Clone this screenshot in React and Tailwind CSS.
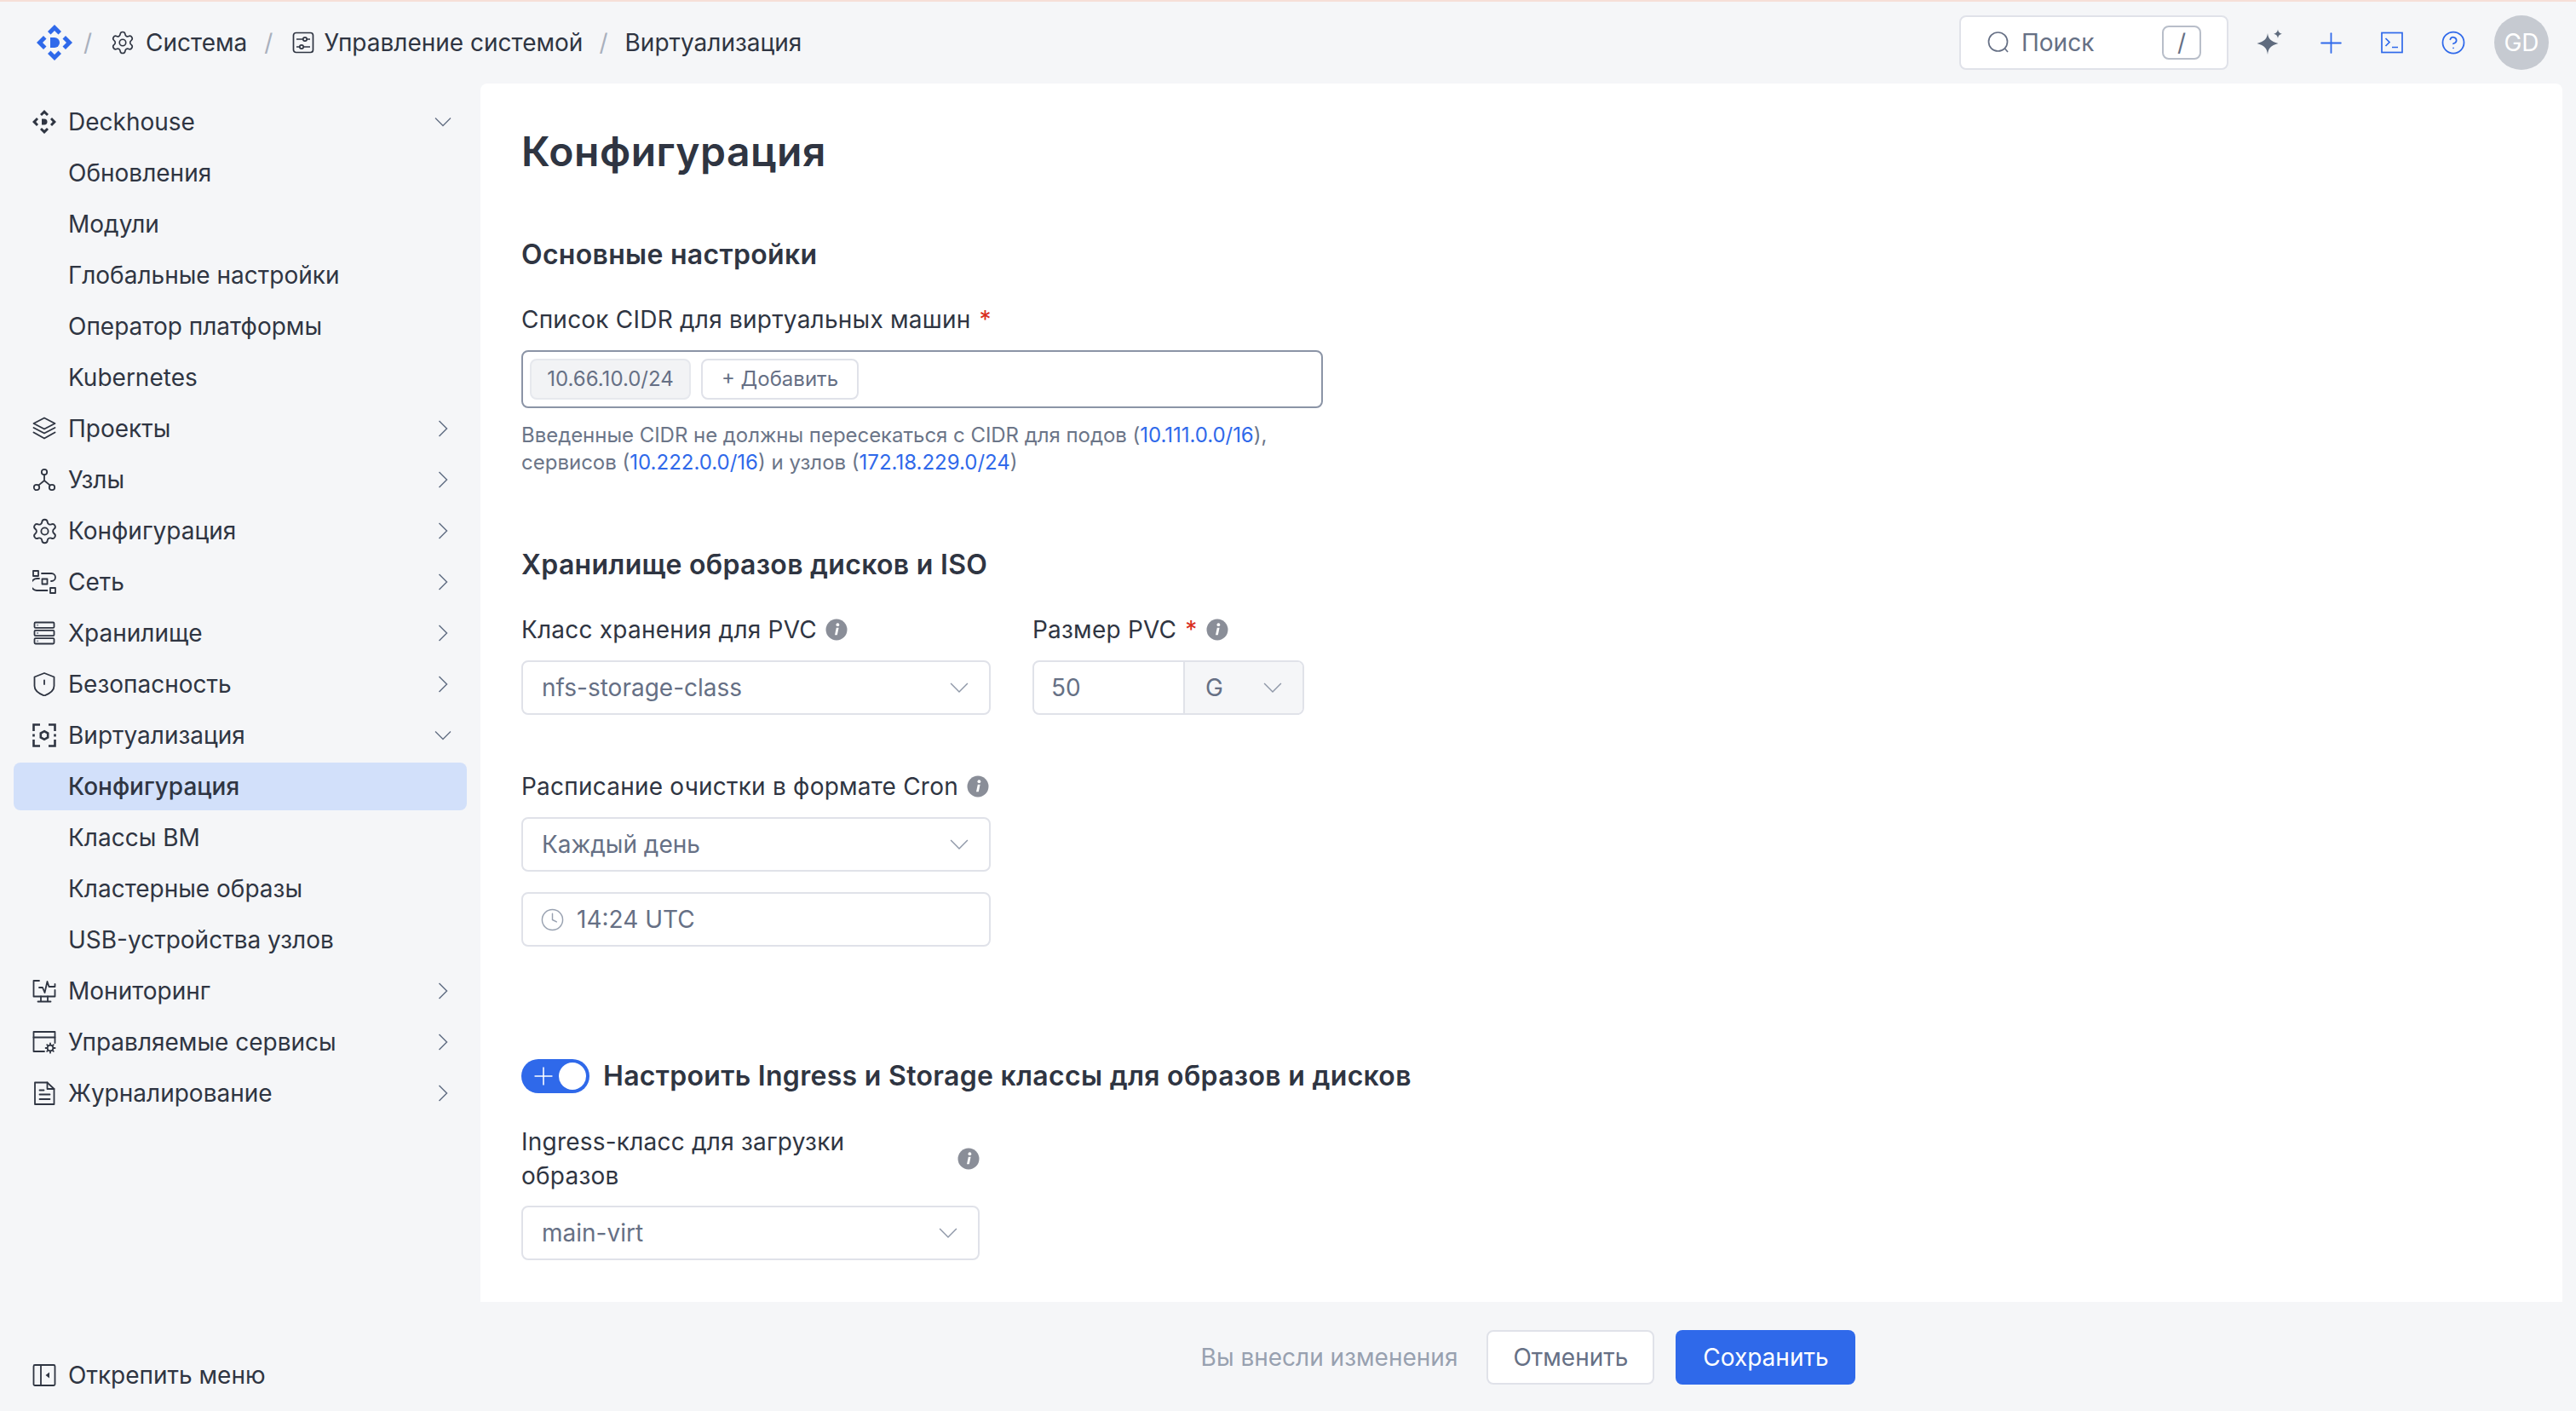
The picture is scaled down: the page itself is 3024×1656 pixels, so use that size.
import React from "react";
import { Settings, CircleHelp, Plus, Clock } from "lucide-react";

const S = ({ size = 28, children, className = "", stroke = "currentColor", sw = 2 }) => (
  <svg width={size} height={size} viewBox="0 0 28 28" fill="none" stroke={stroke} strokeWidth={sw} strokeLinecap="round" strokeLinejoin="round" className={"shrink-0 " + className}>
    {children}
  </svg>
);

const DeckIcon = () => (
  <S sw={0}>
    <g fill="#2f3542" stroke="none">
      <path d="M14 0 19 5 17 7 14 4.200 11 7 9 5Z" />
      <path d="M14 28 19 23 17 21 14 23.800 11 21 9 23Z" />
      <path d="M0 14 5 9 7 11 4.200 14 7 17 5 19Z" />
      <path d="M28 14 23 9 21 11 23.800 14 21 17 23 19Z" />
      <path d="M11 10.5h3a3.5 3.5 0 0 1 0 7h-3Z" />
    </g>
  </S>
);
const LayersI = () => (
  <S sw={1.8}>
    <path d="M14 1.5 26.5 8 14 14.5 1.5 8Z" />
    <path d="M1.5 13 14 19.5 26.5 13" />
    <path d="M1.5 18.5 14 25.5 26.5 18.5" />
  </S>
);
const NodesI = () => (
  <S sw={1.8}>
    <circle cx="14" cy="5" r="3.2" />
    <circle cx="5" cy="23" r="3.2" />
    <circle cx="23" cy="23" r="3.2" />
    <path d="M14 8.2V15L7.2 20.6M14 15 20.8 20.6" />
  </S>
);
const NetI = () => (
  <S sw={1.8}>
    <rect x="1" y="1" width="6" height="6" />
    <rect x="11.5" y="10.5" width="6" height="6" />
    <rect x="21" y="21" width="6" height="6" />
    <path d="M11 4h11.5a4 4 0 0 1 0 9h-.5M8 10H6a5 5 0 0 0-1 14h12.5" />
  </S>
);
const StorageI = () => (
  <S sw={1.8}>
    <rect x="2.5" y="1.5" width="23" height="6.4" rx="1.2" />
    <rect x="2.5" y="10.8" width="23" height="6.4" rx="1.2" />
    <rect x="2.5" y="20.1" width="23" height="6.4" rx="1.2" />
    <path d="M5.8 4.7h.6M5.8 14h.6M5.8 23.3h.6" stroke="#8a91a0" />
  </S>
);
const ShieldI = () => (
  <S sw={1.8}>
    <path d="M14 1 25.5 5.5V16c0 5-5 9-11.5 11.5C7.5 25 2.5 21 2.5 16V5.5Z" />
    <path d="M14 9.5V14" />
  </S>
);
const VirtI = () => (
  <S sw={2.6}>
    <g strokeLinecap="butt" strokeLinejoin="miter">
      <path d="M1.5 9V1.5H9M19 1.5h7.5V9M1.5 19v7.5H9M19 26.500h7.500V19" />
      <path d="M1.5 12.5v3M26.5 12.5v3" />
      <path d="M14 9.2 18.2 11.6V16.4L14 18.8 9.8 16.4V11.6Z" />
    </g>
  </S>
);
const MonitorI = () => (
  <S sw={1.8}>
    <path d="M8 2H1.5V20.5H26.5V13M26.5 6V8" />
    <path d="M8 10h4l2.5 6 3-13 2 6h7" />
    <path d="M10 20.5V26M18 20.5V26M6.5 26.5h15" />
  </S>
);
const ServiceI = () => (
  <S sw={1.8}>
    <path d="M14 25H1.5V2H26.5V15" />
    <path d="M1.5 8.5H26.5" />
    <circle cx="21" cy="21" r="3.4" />
    <path d="M21 15.5v2M21 24.5v2.2M15.6 21h2M24.4 21h2.2M17.2 17.2l1.4 1.4M23.4 23.4l1.4 1.4M24.8 17.2l-1.4 1.4M18.6 23.4l-1.4 1.4" />
  </S>
);
const DocI = () => (
  <S sw={1.8}>
    <path d="M3 1.5h14.5L25.5 9V27H3Z" />
    <path d="M17.5 1.5V9H25.5" />
    <path d="M8.5 10.5h5M8.5 15.5h12M8.5 21h12" />
  </S>
);
const UnpinI = () => (
  <S sw={1.8}>
    <rect x="1.5" y="2" width="25" height="24" rx="1.5" />
    <path d="M10 2V26" />
    <path d="M20 10.5v7l-4.5-3.5Z" fill="currentColor" stroke="none" />
  </S>
);

const ChevR = () => (
  <svg width="20" height="20" viewBox="0 0 20 20" fill="none" stroke="#636f84" strokeWidth="1.5" className="shrink-0">
    <path d="M5.5 1 14.5 10 5.5 19" />
  </svg>
);
const ChevD = ({ color = "#636f84", size = 20 }) => (
  <svg width={size} height={size} viewBox="0 0 20 20" fill="none" stroke={color} strokeWidth="1.3" className="shrink-0">
    <path d="M1 5.5 10 14.5 19 5.5" />
  </svg>
);

const nav = [
  { t: "Deckhouse", i: <DeckIcon />, c: "d" },
  { t: "Обновления" },
  { t: "Модули" },
  { t: "Глобальные настройки" },
  { t: "Оператор платформы" },
  { t: "Kubernetes" },
  { t: "Проекты", i: <LayersI />, c: "r" },
  { t: "Узлы", i: <NodesI />, c: "r" },
  { t: "Конфигурация", i: <Settings size={33} strokeWidth={1.35} className="-m-[2.5px] shrink-0" />, c: "r" },
  { t: "Сеть", i: <NetI />, c: "r" },
  { t: "Хранилище", i: <StorageI />, c: "r" },
  { t: "Безопасность", i: <ShieldI />, c: "r" },
  { t: "Виртуализация", i: <VirtI />, c: "d" },
  { t: "Конфигурация", active: true },
  { t: "Классы ВМ" },
  { t: "Кластерные образы" },
  { t: "USB-устройства узлов" },
  { t: "Мониторинг", i: <MonitorI />, c: "r" },
  { t: "Управляемые сервисы", i: <ServiceI />, c: "r" },
  { t: "Журналирование", i: <DocI />, c: "r" },
];

const NavRow = ({ t, i, c, active }) => (
  <div className="h-[60px] px-4 py-[2px]">
    <div className={"flex h-14 items-center rounded-[8px] pl-[22px] pr-[18px] " + (active ? "bg-[#d2e0fa]" : "")}>
      <div className="flex w-[28px] shrink-0 items-center">{i}</div>
      <span className={"ml-[14px] flex-1 text-[28px] leading-[40px] " + (active ? "font-medium" : "")}>{t}</span>
      {c === "r" && <ChevR />}
      {c === "d" && <ChevD />}
    </div>
  </div>
);

const Info = ({ className = "" }) => (
  <svg width="26" height="26" viewBox="0 0 26 26" className={"shrink-0 " + className}>
    <circle cx="13" cy="13" r="12.5" fill="#8a8e98" />
    <circle cx="14.4" cy="7.2" r="1.9" fill="#fff" />
    <path d="M12.8 10.8h2.8l-1.8 8.4h-2.8Z" fill="#fff" />
  </svg>
);

const Label = ({ children, req, info, className = "" }) => (
  <div className={"flex h-10 items-center text-[28px] leading-10 tracking-[0.22px] text-[#2f3542] " + className}>
    <span>{children}</span>
    {req && <span className="ml-[10px] text-[#d92d20]">*</span>}
    {info && <Info className="ml-[10px]" />}
  </div>
);

const Select = ({ value, className = "" }) => (
  <div className={"mt-4 flex h-16 items-center justify-between rounded-[8px] border-2 border-[#e0e2e9] bg-white pl-[22px] pr-[24px] text-[28px] text-[#667085] " + className}>
    <span>{value}</span>
    <ChevD color="#8f98a8" size={22} />
  </div>
);

const Link = ({ children }) => <span className="text-[#2f69ea]">{children}</span>;

export default function App() {
  return (
    <div className="flex h-[1656px] w-[3024px] flex-col overflow-hidden border-t-2 border-[#f6dfd7] bg-[#f5f6f8] font-[Inter,sans-serif] text-[#2f3542]">
      <header className="flex h-[96px] shrink-0 items-center pl-[43px] pr-[32px] text-[28px]">
        <svg width="42" height="42" viewBox="0 0 42 42" className="shrink-0" fill="#2f69ea">
          <path d="M21 0 29 8 25.5 11.5 21 7 16.5 11.5 13 8Z" />
          <path d="M21 42 29 34 25.5 30.5 21 35 16.5 30.5 13 34Z" />
          <path d="M0 21 8 13 11.5 16.5 7 21 11.5 25.5 8 29Z" />
          <path d="M42 21 34 13 30.5 16.5 35 21 30.5 25.5 34 29Z" />
          <path d="M16 15h5a6 6 0 0 1 0 12h-5Z" />
        </svg>
        <span className="ml-[13px] text-[#a9b0bd]">/</span>
        <Settings size={30} strokeWidth={1.3} className="ml-[21px] -mr-[2px] shrink-0" />
        <span className="ml-[14px]">Система</span>
        <span className="ml-[20px] text-[#a9b0bd]">/</span>
        <svg width="26" height="26" viewBox="0 0 26 26" fill="none" stroke="currentColor" strokeWidth="1.7" className="ml-[23px] shrink-0">
          <rect x="1.5" y="1.5" width="23" height="23" rx="3" />
          <path d="M5 9h7M17.5 9H21M5 18h3.5M14 18h7" />
          <circle cx="15" cy="9" r="2.2" />
          <circle cx="11" cy="18" r="2.2" />
        </svg>
        <span className="ml-[11px]">Управление системой</span>
        <span className="ml-[19px] text-[#a9b0bd]">/</span>
        <span className="ml-[20px]">Виртуализация</span>
        <div className="ml-auto flex h-16 w-[316px] items-center rounded-[8px] border-2 border-[#e0e2e9] bg-white pl-[30px] pr-[30px] text-[#667085]">
          <svg width="28" height="28" viewBox="0 0 28 28" fill="none" stroke="currentColor" strokeWidth="1.7" className="shrink-0">
            <circle cx="13.500" cy="13" r="11" />
            <path d="M21.500 21 25 25" />
          </svg>
          <span className="ml-[13px] flex-1">Поиск</span>
          <span className="flex h-10 w-[46px] items-center justify-center rounded-[8px] border-2 border-[#b8bec9] text-[28px]">/</span>
        </div>
        <svg width="32" height="32" viewBox="0 0 32 32" fill="#5f6b7e" className="ml-[33px] shrink-0">
          <path d="M13 5c.8 6.500 3.500 9.500 12.500 12-9 2.500-11.700 5.500-12.500 13-.8-7.500-3.500-10.500-12.500-13C9.500 14.500 12.200 11.500 13 5Z" />
          <path d="M25 .5c.5 3 1.600 4.200 4.800 5.200-3.200 1-4.300 2.200-4.800 5.200-.5-3-1.600-4.200-4.800-5.200 3.200-1 4.300-2.200 4.800-5.200Z" />
        </svg>
        <Plus size={39} strokeWidth={1.1} color="#2f69ea" className="ml-[36px] shrink-0" />
        <svg width="26" height="26" viewBox="0 0 26 26" fill="none" stroke="#2f69ea" strokeWidth="1.7" className="ml-[39px] shrink-0">
          <rect x="1" y="1.500" width="24" height="23" />
          <path d="M5.500 8 10 12.500 5.500 17M13 18.500h7" />
        </svg>
        <CircleHelp size={30} strokeWidth={1.4} color="#2f69ea" className="ml-[44px] shrink-0" />
        <div className="ml-[33px] flex size-16 shrink-0 items-center justify-center rounded-full bg-[#c6cad1] text-[28px] text-white">GD</div>
      </header>

      <div className="flex min-h-0 flex-1">
        <aside className="flex w-[564px] shrink-0 flex-col justify-between pb-[12px] pt-[15px]">
          <nav>
            {nav.map((n, k) => (
              <NavRow key={k} {...n} />
            ))}
          </nav>
          <NavRow t="Открепить меню" i={<UnpinI />} />
        </aside>

        <div className="flex min-w-0 flex-1 flex-col">
          <main className="mr-4 h-[1430px] shrink-0 overflow-hidden rounded-t-[8px] bg-white pl-12 pt-[48px]">
            <h1 className="text-[48px] font-semibold leading-[64px] tracking-[0.5px]">Конфигурация</h1>

            <h2 className="mt-[69px] text-[32px] font-semibold leading-10 tracking-[0.3px]">Основные настройки</h2>
            <Label className="mt-9" req>Список CIDR для виртуальных машин</Label>
            <div className="mt-4 flex h-[68px] w-[941px] items-center gap-3 rounded-[8px] border-2 border-[#8b94a6] pl-2">
              <span className="flex h-12 w-[189px] items-center justify-center rounded-[8px] border-2 border-[#e6e8ed] bg-[#f2f3f5] text-[24px] text-[#667085]">10.66.10.0/24</span>
              <span className="flex h-12 w-[185px] items-center justify-center rounded-[8px] border-2 border-[#e0e2e9] bg-white text-[24px] text-[#667085]">+ Добавить</span>
            </div>
            <p className="mt-4 w-[941px] text-[24px] leading-8 text-[#6b7588]">
              <span className="tracking-[-0.04px]">Введенные CIDR не должны пересекаться с CIDR для подов (<Link>10.111.0.0/16</Link>),</span>
              <br />
              сервисов (<Link>10.222.0.0/16</Link>) и узлов (<Link>172.18.229.0/24</Link>)
            </p>

            <h2 className="mt-[84px] text-[32px] font-semibold leading-10 tracking-[0.3px]">Хранилище образов дисков и ISO</h2>
            <div className="mt-9 flex gap-[49px]">
              <div className="w-[551px]">
                <Label info>Класс хранения для PVC</Label>
                <Select value="nfs-storage-class" />
              </div>
              <div className="w-[319px]">
                <Label req info>Размер PVC</Label>
                <div className="mt-4 flex h-16 overflow-hidden rounded-[8px] border-2 border-[#e0e2e9] text-[28px] text-[#667085]">
                  <div className="flex w-[177px] items-center border-r-2 border-[#e0e2e9] pl-5">50</div>
                  <div className="flex flex-1 items-center justify-between bg-[#f5f6f8] pl-6 pr-[24px]">
                    <span>G</span>
                    <ChevD color="#8f98a8" size={22} />
                  </div>
                </div>
              </div>
            </div>

            <div className="mt-16 w-[551px]">
              <Label info>Расписание очистки в формате Cron</Label>
              <Select value="Каждый день" />
              <div className="mt-6 flex h-16 items-center rounded-[8px] border-2 border-[#e0e2e9] pl-[20px] text-[28px] text-[#667085]">
                <Clock size={29} strokeWidth={1.2} color="#98a1b0" className="shrink-0" />
                <span className="ml-[14px]">14:24 UTC</span>
              </div>
            </div>

            <div className="mt-[132px] flex h-10 items-center">
              <div className="flex h-10 w-20 items-center justify-between rounded-full bg-[#2f69ea] pl-[9px] pr-1 text-white">
                <Plus size={34} strokeWidth={1.1} />
                <span className="h-[32px] w-[32px] rounded-full bg-white" />
              </div>
              <span className="ml-4 text-[32px] font-semibold leading-10 tracking-[0.3px]">Настроить Ingress и Storage классы для образов и дисков</span>
            </div>

            <div className="mt-[37px] w-[538px]">
              <div className="flex items-center justify-between text-[28px] leading-10 tracking-[0.22px]">
                <span className="w-[420px]">Ingress-класс для загрузки образов</span>
                <Info />
              </div>
              <Select value="main-virt" className="!mt-[15px]" />
            </div>
          </main>

          <footer className="flex flex-1 items-center justify-center pt-[2px] text-[28px]">
            <span className="text-[#98a1b0]">Вы внесли изменения</span>
            <span className="ml-[34px] flex h-16 w-[197px] items-center justify-center rounded-[8px] border-2 border-[#e0e2e9] bg-white text-[#667085]">Отменить</span>
            <span className="ml-[25px] flex h-16 w-[211px] items-center justify-center rounded-[8px] bg-[#2f69ea] text-white">Сохранить</span>
          </footer>
        </div>
      </div>
    </div>
  );
}
